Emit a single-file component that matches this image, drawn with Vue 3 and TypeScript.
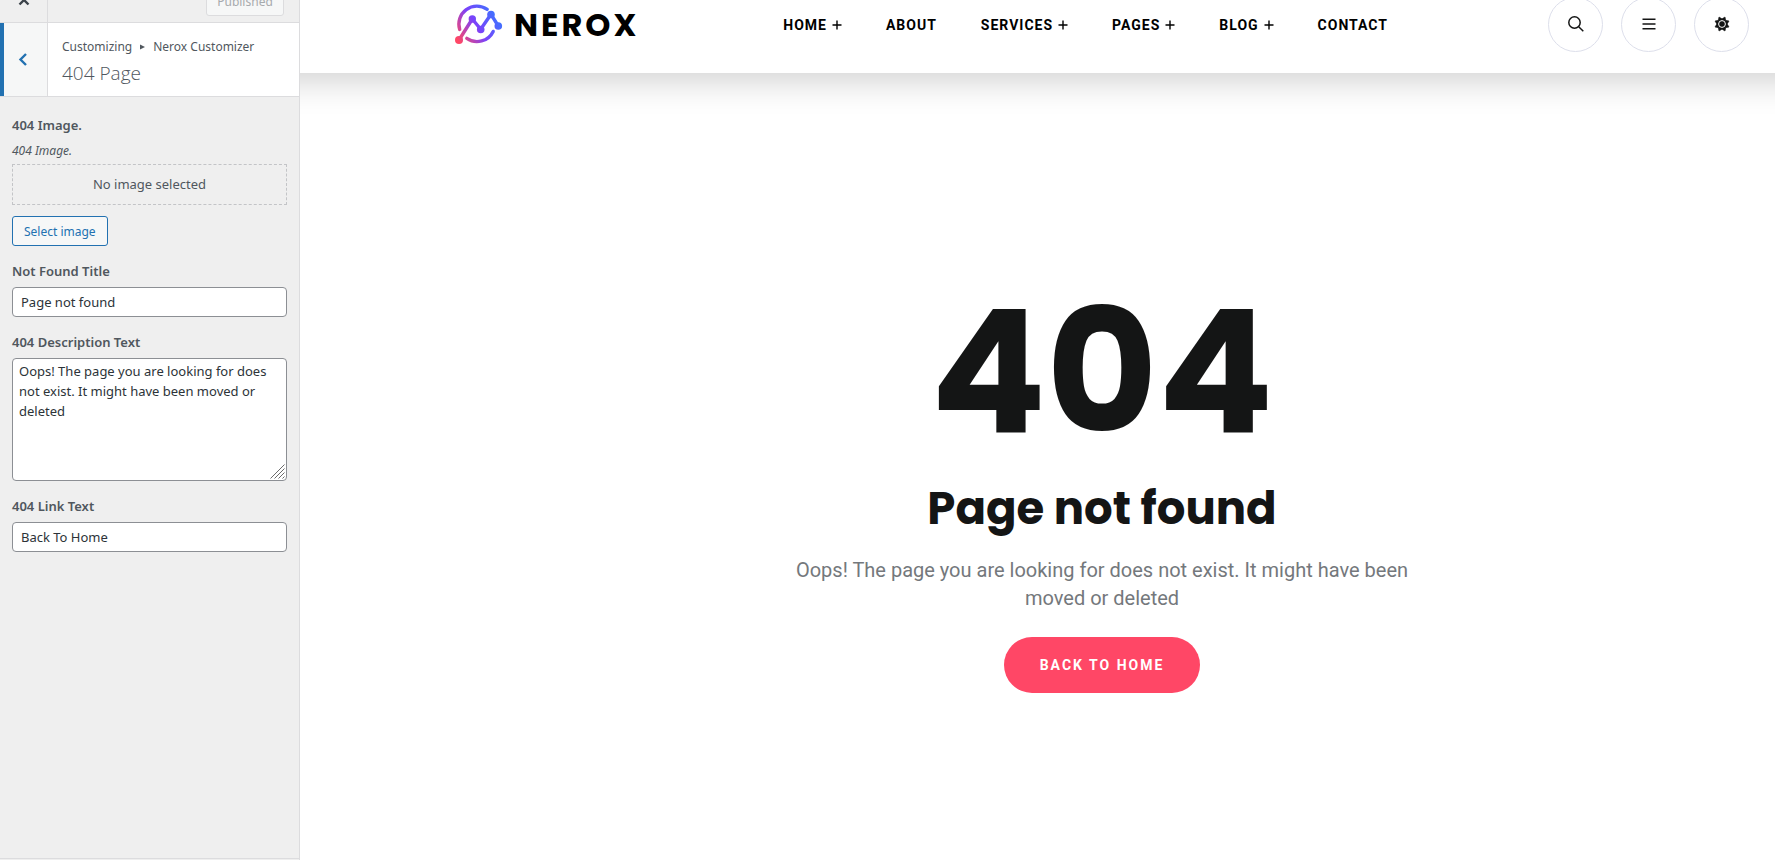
<script setup lang="ts">
import { ref } from 'vue'

interface NavItem {
  label: string
  expandable: boolean
}

const navItems: NavItem[] = [
  { label: 'HOME', expandable: true },
  { label: 'ABOUT', expandable: false },
  { label: 'SERVICES', expandable: true },
  { label: 'PAGES', expandable: true },
  { label: 'BLOG', expandable: true },
  { label: 'CONTACT', expandable: false },
]

const title = ref('Page not found')
const description = ref(
  'Oops! The page you are looking for does not exist. It might have been moved or deleted',
)
const linkText = ref('Back To Home')
</script>

<template>
  <div class="layout">
    <aside class="sidebar">
      <div class="topbar">
        <button class="close" type="button" aria-label="Close customizer">
          <svg width="12" height="12" viewBox="0 0 12 12">
            <path d="M1.5 1.5 10.5 10.5M10.5 1.5 1.5 10.5" stroke="#3c434a" stroke-width="2.4" fill="none" />
          </svg>
        </button>
        <button class="published" type="button" disabled>Published</button>
      </div>

      <div class="section-head">
        <button class="back" type="button" aria-label="Back">
          <svg width="10" height="14" viewBox="0 0 10 14">
            <path d="M8 1 2.5 6.5 8 12" stroke="#2271b1" stroke-width="2.4" fill="none" />
          </svg>
        </button>
        <div class="section-title">
          <p class="crumbs">
            <span>Customizing</span>
            <svg width="5" height="6" viewBox="0 0 5 6"><path d="M0 0.5 5 3 0 5.5Z" fill="#50575e" /></svg>
            <span>Nerox Customizer</span>
          </p>
          <h3>404 Page</h3>
        </div>
      </div>

      <form class="controls" @submit.prevent>
        <div class="control">
          <span class="label">404 Image.</span>
          <span class="hint">404 Image.</span>
          <div class="placeholder">No image selected</div>
          <button class="select-image" type="button">Select image</button>
        </div>
        <div class="control">
          <label class="label" for="nf-title">Not Found Title</label>
          <input id="nf-title" v-model="title" class="field" type="text" />
        </div>
        <div class="control">
          <label class="label" for="nf-desc">404 Description Text</label>
          <div class="area-wrap">
            <textarea id="nf-desc" v-model="description" class="field area" rows="5"></textarea>
            <svg class="grip" width="15" height="15" viewBox="0 0 15 15">
              <path d="M0.5 14.5 14.5 0.5M4.5 14.5 14.5 4.5M8.5 14.5 14.5 8.5M12.5 14.5 14.5 12.5" stroke="#6b6b6b" fill="none" />
            </svg>
          </div>
        </div>
        <div class="control">
          <label class="label" for="nf-link">404 Link Text</label>
          <input id="nf-link" v-model="linkText" class="field" type="text" />
        </div>
      </form>

      <div class="sidebar-foot"></div>
    </aside>

    <div class="preview">
      <header class="site-header">
        <a class="logo" href="#">
          <svg width="48" height="42" viewBox="0 0 48 42" fill="none">
            <defs>
              <linearGradient id="brand" gradientUnits="userSpaceOnUse" x1="3" y1="37" x2="42" y2="12">
                <stop offset="0" stop-color="#ff4766" />
                <stop offset="0.5" stop-color="#7b42fa" />
                <stop offset="1" stop-color="#3f72ff" />
              </linearGradient>
            </defs>
            <g stroke="url(#brand)" stroke-width="3.4" stroke-linecap="round" stroke-linejoin="round">
              <path d="M4.7 26.5A18 18 0 0 1 32.2 6.4" />
              <path d="M38.2 28.4A18 18 0 0 1 11.8 35.4" />
              <path d="M4 37 17.3 16 25.7 26.3 36 11.3 43.3 23" />
            </g>
            <g fill="url(#brand)">
              <circle cx="4" cy="37" r="4" />
              <circle cx="17.3" cy="16" r="3.7" />
              <circle cx="25.7" cy="26.5" r="3.8" />
              <circle cx="36" cy="11.5" r="3.8" />
              <circle cx="43.3" cy="23" r="3.8" />
            </g>
          </svg>
          <span>NEROX</span>
        </a>

        <nav class="nav">
          <a v-for="item in navItems" :key="item.label" href="#">
            {{ item.label }}<svg v-if="item.expandable" width="10" height="10" viewBox="0 0 10 10">
              <path d="M0.5 5H9.5M5 0.5V9.5" stroke="#000" stroke-width="1.4" />
            </svg>
          </a>
        </nav>

        <div class="actions">
          <button type="button" aria-label="Search">
            <svg width="16" height="16" viewBox="0 0 16 16" fill="none" stroke="#141515" stroke-width="1.5">
              <circle cx="6.5" cy="6.5" r="5.7" />
              <path d="M10.7 10.7 15.3 15.3" />
            </svg>
          </button>
          <button type="button" aria-label="Menu">
            <svg width="14" height="12" viewBox="0 0 14 12" stroke="#141515" stroke-width="1.5">
              <path d="M0.5 1.2H13.5M0.5 6H13.5M0.5 10.8H13.5" />
            </svg>
          </button>
          <button type="button" aria-label="Colour mode">
            <svg width="16" height="16" viewBox="0 0 16 16">
              <path d="M5 1 8 2.8 11 1 11.7 4.3 15 5 13.2 8 15 11 11.7 11.7 11 15 8 13.2 5 15 4.3 11.7 1 11 2.8 8 1 5 4.3 4.3Z" fill="#141515" stroke="#141515" stroke-width="0.6" stroke-linejoin="round" />
              <circle cx="8" cy="8" r="3.4" fill="#141515" stroke="#fff" stroke-width="1" />
            </svg>
          </button>
        </div>
      </header>

      <main class="not-found">
        <h1>404</h1>
        <h2>{{ title }}</h2>
        <p>{{ description }}</p>
        <a class="home-link" href="#">{{ linkText }}</a>
      </main>
    </div>
  </div>
</template>

<style>
body {
  margin: 0;
  background: #fff;
}
</style>

<style scoped>
* {
  box-sizing: border-box;
}

.layout {
  display: flex;
  min-height: 100vh;
  overflow: hidden;
}

button {
  font-family: inherit;
  padding: 0;
  cursor: pointer;
}

a {
  color: inherit;
  text-decoration: none;
}

.sidebar {
  flex: 0 0 300px;
  display: flex;
  flex-direction: column;
  background: #efefef;
  border-right: 1px solid #dcdcde;
  color: #50575e;
  font-family: "Segoe UI", "Noto Sans", "Open Sans", sans-serif;
  font-size: 13px;
}

.topbar {
  display: flex;
  justify-content: space-between;
  align-items: center;
  height: 46px;
  margin-top: -23px;
  padding-right: 15px;
  border-bottom: 1px solid #dcdcde;
}

.close {
  display: flex;
  align-items: center;
  justify-content: center;
  width: 48px;
  height: 45px;
  background: #efefef;
  border: 0;
  border-right: 1px solid #dcdcde;
}

.published {
  width: 78px;
  height: 32px;
  padding-top: 4px;
  background: #f6f7f7;
  border: 1px solid #dcdcde;
  border-radius: 3px;
  color: #a7aaad;
  font-size: 12px;
}

.section-head {
  display: flex;
  background: #fff;
  border-bottom: 1px solid #dcdcde;
}

.back {
  display: flex;
  align-items: center;
  justify-content: center;
  width: 48px;
  padding-right: 5px;
  background: #f6f7f7;
  border: 0;
  border-left: 4px solid #2271b1;
  border-right: 1px solid #dcdcde;
}

.section-title {
  padding: 14px 14px 10px;
}

.crumbs {
  display: flex;
  align-items: center;
  gap: 8px;
  margin: 0;
  font-size: 12px;
  line-height: 20px;
}

h3 {
  margin: 3px 0 0;
  font-family: "Segoe UI", "Open Sans", sans-serif;
  font-size: 19px;
  font-weight: 300;
  line-height: 26px;
}

.controls {
  display: flex;
  flex-direction: column;
  gap: 13px;
  padding: 16px 12px;
}

.control {
  display: flex;
  flex-direction: column;
}

.label {
  font-size: 13px;
  font-weight: 600;
  line-height: 24px;
  margin-bottom: 4px;
}

.hint {
  font-size: 12px;
  font-style: italic;
  line-height: 20px;
  margin-bottom: 3px;
}

.placeholder {
  padding: 10px;
  border: 1px dashed #c3c4c7;
  font-size: 13px;
  line-height: 19px;
  text-align: center;
}

.select-image {
  align-self: flex-start;
  height: 30px;
  margin-top: 11px;
  padding: 0 11px;
  background: #f6f7f7;
  border: 1px solid #2271b1;
  border-radius: 3px;
  color: #2271b1;
  font-size: 12px;
}

.field {
  display: block;
  width: 100%;
  height: 30px;
  padding: 0 8px;
  background: #fff;
  border: 1px solid #8c8f94;
  border-radius: 4px;
  color: #2c3338;
  font-family: inherit;
  font-size: 13px;
}

.area-wrap {
  position: relative;
}

.area {
  height: 123px;
  padding: 2px 6px;
  line-height: 20px;
  resize: none;
}

.grip {
  position: absolute;
  right: 2px;
  bottom: 2px;
  pointer-events: none;
}

.sidebar-foot {
  height: 2px;
  margin-top: auto;
  border-top: 1px solid #dcdcde;
}

.preview {
  flex: 1;
  min-width: 0;
  overflow: hidden;
  color: #141515;
  font-family: Roboto, sans-serif;
}

.site-header {
  display: flex;
  align-items: center;
  height: 98px;
  margin: -25px -40px 0;
  padding: 0 66px 0 195px;
  background: #fff;
  box-shadow: 0 10px 30px rgba(0, 0, 0, 0.17);
}

.logo {
  display: flex;
  align-items: center;
  gap: 11px;
  color: #000;
  font-family: Poppins, Lato, sans-serif;
  font-size: 32px;
  font-weight: 700;
  letter-spacing: 3px;
  line-height: 42px;
}

.logo span {
  padding-top: 2px;
}

.nav {
  display: flex;
  gap: 44px;
  margin-left: 144px;
  padding-top: 2px;
  color: #000;
  font-size: 14px;
  font-weight: 700;
  letter-spacing: 1px;
  line-height: 20px;
  white-space: nowrap;
}

.nav svg {
  margin-left: 5px;
}

.actions {
  display: flex;
  gap: 18px;
  margin-left: auto;
}

.actions button {
  display: flex;
  align-items: center;
  justify-content: center;
  width: 55px;
  height: 55px;
  background: #fff;
  border: 1px solid #dddfeb;
  border-radius: 50%;
}

.not-found {
  display: flex;
  flex-direction: column;
  align-items: center;
  padding: 213px 26px 40px 155px;
  text-align: center;
}

h1,
h2 {
  margin: 0;
  font-family: Poppins, Inter, sans-serif;
  font-weight: 700;
}

h1 {
  font-size: 171px;
  line-height: 172px;
}

h2 {
  margin-top: 21px;
  font-size: 45px;
  line-height: 60px;
}

.not-found p {
  max-width: 640px;
  margin: 17px 0 25px;
  color: #74787c;
  font-size: 20px;
  line-height: 28px;
}

.home-link {
  padding: 0 36px;
  background: #ff4766;
  border-radius: 28px;
  color: #fff;
  font-size: 14px;
  font-weight: 700;
  letter-spacing: 2px;
  line-height: 56px;
  text-transform: uppercase;
}
</style>
